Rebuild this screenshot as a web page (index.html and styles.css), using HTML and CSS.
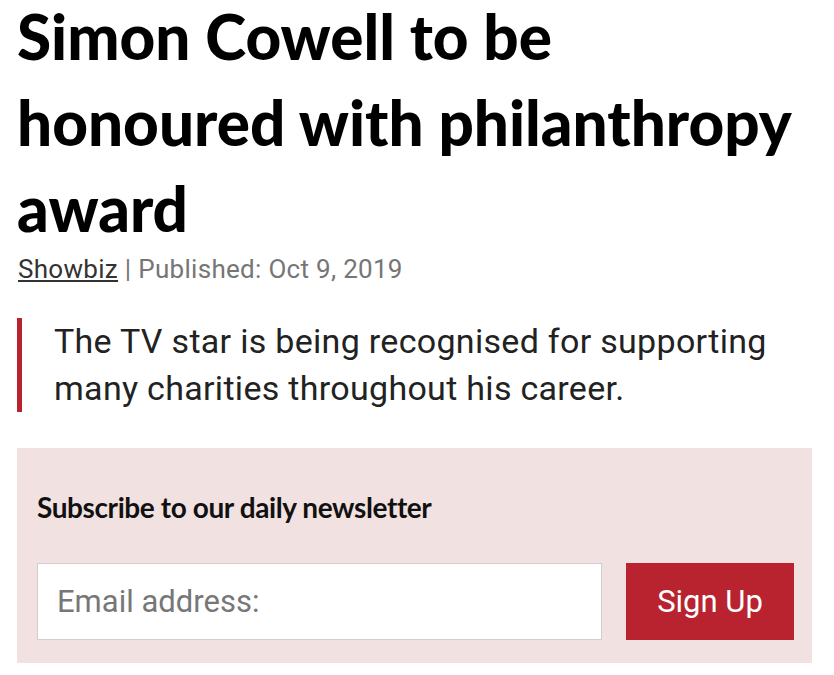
FILE: index.html
```html
<!DOCTYPE html>
<html>
<head>
<meta charset="utf-8">
<link rel="stylesheet" href="styles.css">
</head>
<body>
<article class="article">
  <h1 class="title">Simon Cowell to be honoured with philanthropy award</h1>
  <div class="meta"><a class="cat" href="#">Showbiz</a> | Published: Oct 9, 2019</div>
  <blockquote class="lede">The TV star is being recognised for supporting many charities throughout his career.</blockquote>
  <section class="newsletter">
    <h3 class="nl-title">Subscribe to our daily newsletter</h3>
    <form class="nl-form">
      <input class="nl-input" type="text" placeholder="Email address:">
      <button class="nl-btn" type="button">Sign Up</button>
    </form>
  </section>
</article>
</body>
</html>
```
FILE: styles.css
```css
html, body { margin: 0; padding: 0; background: #fff; }
body { font-family: Roboto, "Liberation Sans", sans-serif; }
.article { padding: 0 22px 0 17px; }
.title {
  font-family: Lato, "Liberation Sans", sans-serif;
  font-weight: 900;
  font-size: 62px;
  line-height: 86px;
  color: #000;
  margin: -7px 0 0 0;
  letter-spacing: 0;
}
.meta {
  font-size: 26px;
  color: #767676;
  margin: 3px 0 0 1px;
  line-height: 30px;
  letter-spacing: 0.3px;
}
.cat { color: #333; text-decoration: underline; text-underline-offset: 2px; }
.lede {
  margin: 34px 0 0 0;
  border-left: 5px solid #b8232f;
  padding: 0 0 0 32px;
  font-size: 34px;
  font-weight: 400;
  line-height: 47px;
  color: #222;
  letter-spacing: 0.3px;
}
.newsletter {
  margin-top: 36px;
  background: #f1e1e1;
  padding: 44px 18px 23px 20px;
}
.nl-title {
  font-family: Lato, "Liberation Sans", sans-serif;
  font-weight: 700;
  font-size: 28px;
  line-height: 30px;
  margin: 0 0 41px 0;
  color: #111;
  letter-spacing: -0.4px;
}
.nl-form { display: flex; gap: 24px; }
.nl-input {
  flex: 1;
  height: 77px;
  box-sizing: border-box;
  border: 1px solid #cfcfcf;
  background: #fff;
  font-family: Roboto, sans-serif;
  font-size: 31px;
  padding: 0 19px;
}
.nl-input::placeholder { color: #777; }
.nl-btn {
  width: 168px;
  height: 77px;
  border: 0;
  background: #b8232f;
  color: #fff;
  font-family: Roboto, sans-serif;
  font-size: 31px;
  padding: 0;
}
```
